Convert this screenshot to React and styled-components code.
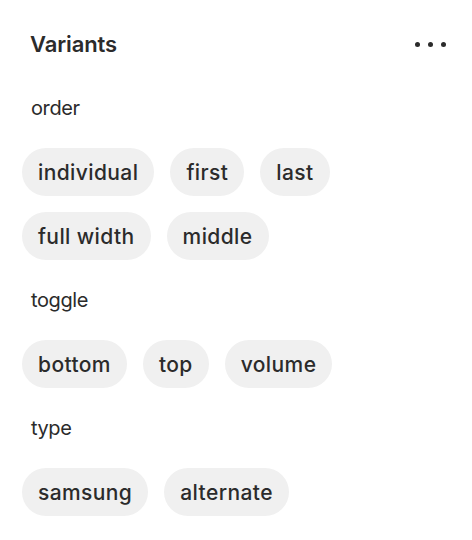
import React from "react";
import styled, { createGlobalStyle } from "styled-components";

const GlobalStyle = createGlobalStyle`
  body {
    margin: 0;
    background: #ffffff;
    font-family: Inter, "Noto Sans", sans-serif;
    color: #2b2b2b;
  }
`;

const Panel = styled.div`
  width: 472px;
  padding: 20px 0 0 22px;
  box-sizing: border-box;
  display: flex;
  flex-direction: column;
  gap: 16px;
`;

const Header = styled.div`
  height: 48px;
  display: flex;
  align-items: center;
  justify-content: space-between;
  padding-left: 8px;
  padding-right: 26px;
`;

const Title = styled.h2`
  margin: 0;
  font-size: 22px;
  font-weight: 600;
  letter-spacing: -0.1px;
`;

const MoreButton = styled.button`
  border: 0;
  background: none;
  padding: 0;
  display: flex;
  gap: 8px;
  cursor: pointer;
`;

const Dot = styled.span`
  width: 5px;
  height: 5px;
  border-radius: 50%;
  background: #2b2b2b;
`;

const Label = styled.div`
  height: 48px;
  display: flex;
  align-items: center;
  padding-left: 9px;
  font-size: 20px;
  font-weight: 400;
  letter-spacing: -0.4px;
`;

const Row = styled.div`
  display: flex;
  gap: 16px;
`;

const Pill = styled.button`
  height: 48px;
  padding: 0 16px;
  border: 0;
  border-radius: 24px;
  background: #f0f0f0;
  color: #2b2b2b;
  font-family: inherit;
  font-size: 21px;
  font-weight: 500;
  letter-spacing: 0.4px;
  cursor: pointer;
`;

const groups = [
  { name: "order", rows: [["individual", "first", "last"], ["full width", "middle"]] },
  { name: "toggle", rows: [["bottom", "top", "volume"]] },
  { name: "type", rows: [["samsung", "alternate"]] },
];

export default function App() {
  return (
    <>
      <GlobalStyle />
      <Panel>
        <Header>
          <Title>Variants</Title>
          <MoreButton aria-label="More">
            <Dot />
            <Dot />
            <Dot />
          </MoreButton>
        </Header>
        {groups.map((group) => (
          <React.Fragment key={group.name}>
            <Label>{group.name}</Label>
            {group.rows.map((row, i) => (
              <Row key={i}>
                {row.map((item) => (
                  <Pill key={item}>{item}</Pill>
                ))}
              </Row>
            ))}
          </React.Fragment>
        ))}
      </Panel>
    </>
  );
}
